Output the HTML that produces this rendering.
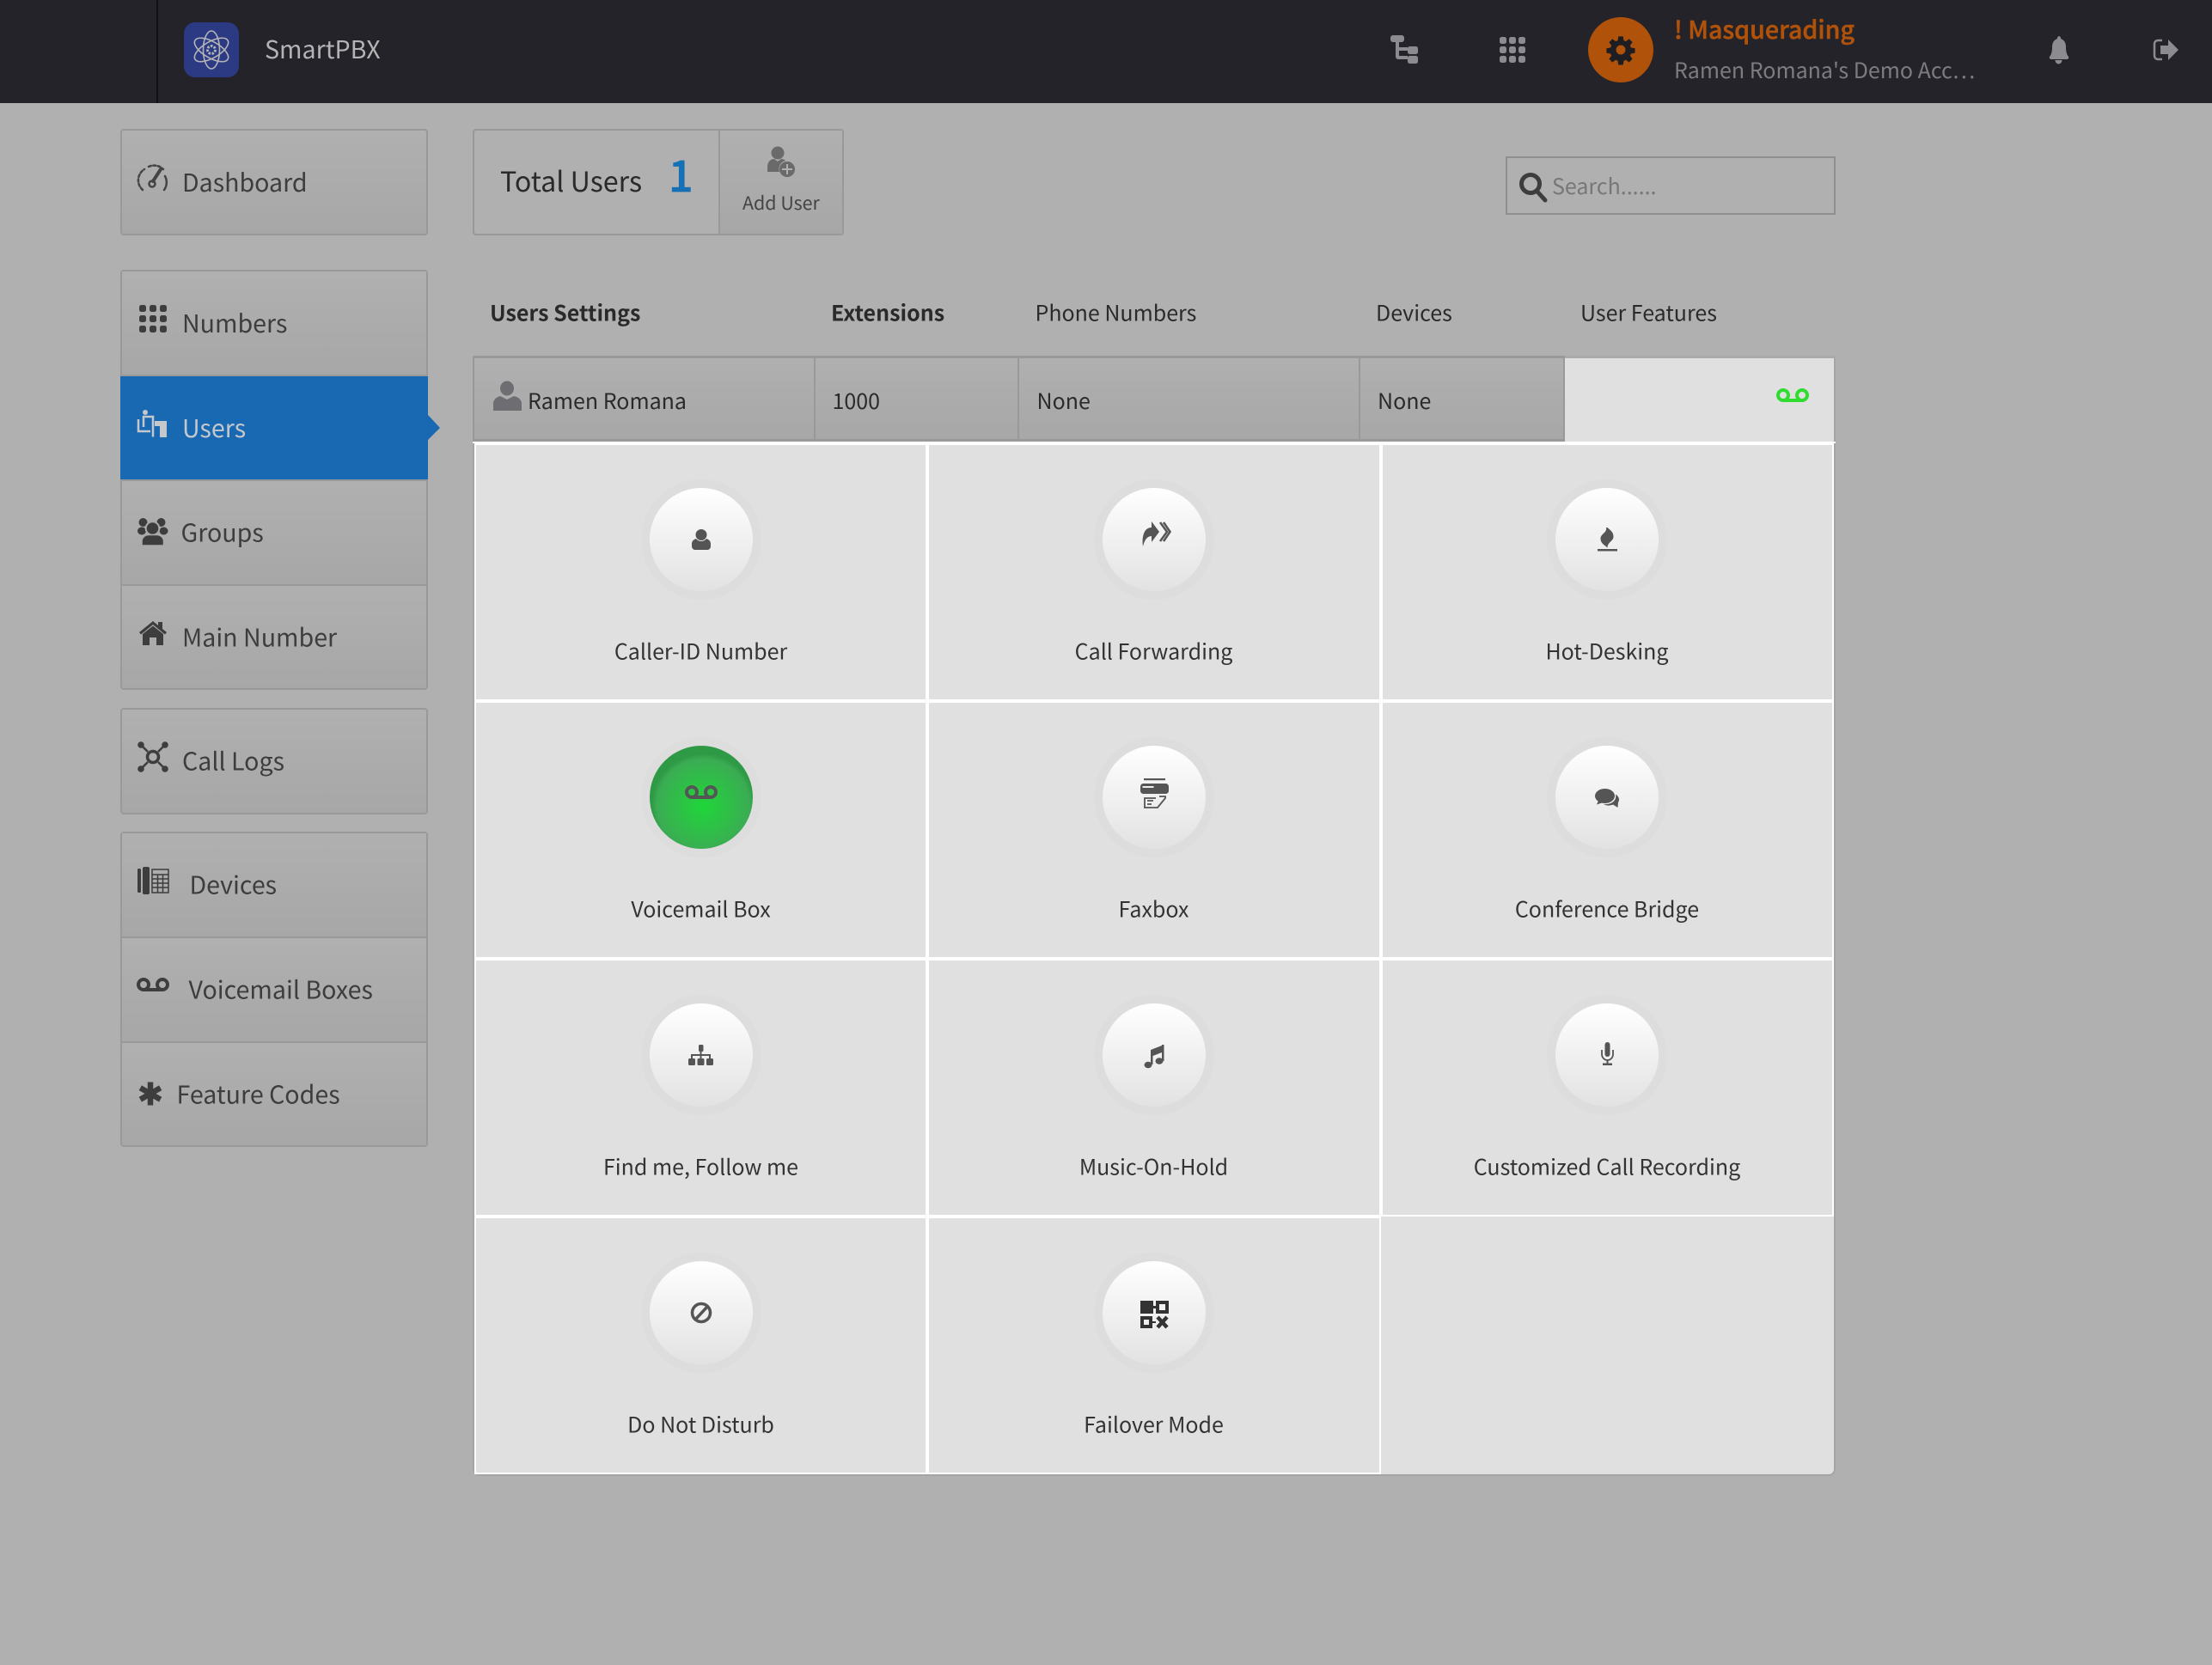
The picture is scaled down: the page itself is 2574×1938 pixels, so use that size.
<!DOCTYPE html>
<html lang="en">
<head>
<meta charset="utf-8">
<title>SmartPBX</title>
<style>
html,body{margin:0;padding:0;width:2574px;height:1938px;overflow:hidden;background:#b0b0b0}
body{position:relative;font-family:"Noto Sans CJK JP","Liberation Sans",sans-serif}
.a{position:absolute;box-sizing:border-box}
.hdr{left:0;top:0;width:2574px;height:120px;background:#232329}
.box{background:linear-gradient(#b0b0b0,#a7a7a7);border:2px solid #999;border-radius:4px}
.g{background:linear-gradient(#b0b0b0,#a7a7a7)}
.cell{height:300px;border:2px solid #fff;background:#e0e0e0}
svg{position:absolute;left:0;top:0}
text{font-family:"Noto Sans CJK JP","Liberation Sans",sans-serif}
</style>
</head>
<body>
<div class="a hdr"></div>
<div class="a" style="left:182px;top:0;width:2px;height:120px;background:#111"></div>

<div class="a box" style="left:140px;top:150px;width:358px;height:124px"></div>
<div class="a box" style="left:550px;top:150px;width:432px;height:124px;background:#b0b0b0"></div>
<div class="a g" style="left:836px;top:152px;width:144px;height:120px;border-left:2px solid #999"></div>

<div class="a box" style="left:140px;top:314px;width:358px;height:489px"></div>
<div class="a g" style="left:142px;top:316px;width:354px;height:120px"></div>
<div class="a" style="left:142px;top:436px;width:354px;height:2px;background:#999"></div>
<div class="a" style="left:140px;top:438px;width:358px;height:120px;background:#1968b2"></div>
<div class="a" style="left:142px;top:558px;width:354px;height:2px;background:#999"></div>
<div class="a g" style="left:142px;top:560px;width:354px;height:120px"></div>
<div class="a" style="left:142px;top:680px;width:354px;height:2px;background:#999"></div>
<div class="a g" style="left:142px;top:682px;width:354px;height:119px"></div>

<div class="a box" style="left:140px;top:824px;width:358px;height:124px"></div>
<div class="a box" style="left:140px;top:968px;width:358px;height:367px"></div>
<div class="a g" style="left:142px;top:970px;width:354px;height:120px"></div>
<div class="a" style="left:142px;top:1090px;width:354px;height:2px;background:#999"></div>
<div class="a g" style="left:142px;top:1092px;width:354px;height:120px"></div>
<div class="a" style="left:142px;top:1212px;width:354px;height:2px;background:#999"></div>
<div class="a g" style="left:142px;top:1214px;width:354px;height:119px"></div>

<div class="a" style="left:1752px;top:182px;width:384px;height:68px;border:2px solid #8f8f8f;background:#b0b0b0"></div>

<!-- user table -->
<div class="a" style="left:550px;top:414px;width:1586px;height:1304px;background:#e0e0e0;border:2px solid #a5a5a5;border-top:0;border-radius:0 0 8px 8px"></div>
<div class="a g" style="left:550px;top:414px;width:1271px;height:100px;border:2px solid #999;border-top:3px solid #999;border-bottom:3px solid #999"></div>
<div class="a" style="left:947px;top:414px;width:2px;height:100px;background:#999"></div>
<div class="a" style="left:1184px;top:414px;width:2px;height:100px;background:#999"></div>
<div class="a" style="left:1581px;top:414px;width:2px;height:100px;background:#999"></div>
<div class="a" style="left:1821px;top:414px;width:315px;height:3px;background:#aaa"></div>
<div class="a" style="left:550px;top:514px;width:1586px;height:2px;background:#fff"></div>

<div class="a cell" style="left:552px;top:516px;width:527px"></div>
<div class="a cell" style="left:1079px;top:516px;width:528px"></div>
<div class="a cell" style="left:1607px;top:516px;width:527px"></div>
<div class="a cell" style="left:552px;top:816px;width:527px"></div>
<div class="a cell" style="left:1079px;top:816px;width:528px"></div>
<div class="a cell" style="left:1607px;top:816px;width:527px"></div>
<div class="a cell" style="left:552px;top:1116px;width:527px"></div>
<div class="a cell" style="left:1079px;top:1116px;width:528px"></div>
<div class="a cell" style="left:1607px;top:1116px;width:527px"></div>
<div class="a cell" style="left:552px;top:1416px;width:527px"></div>
<div class="a cell" style="left:1079px;top:1416px;width:528px"></div>

<svg width="2574" height="1938" viewBox="0 0 2574 1938" xmlns="http://www.w3.org/2000/svg">
<defs>
<linearGradient id="w" x1="0" y1="0" x2="0" y2="1"><stop offset="0" stop-color="#fff"/><stop offset="1" stop-color="#e2e2e2"/></linearGradient>
<radialGradient id="gr" cx=".52" cy=".58" r=".5"><stop offset="0" stop-color="#1fd639"/><stop offset=".9" stop-color="#3bac53"/><stop offset="1" stop-color="#2f9a45"/></radialGradient>
<g id="btn"><circle r="65" fill="none" stroke="#dddddd" stroke-width="10"/><circle r="60" fill="url(#w)"/></g>
<g id="vm"><circle cx="-11" cy="0" r="6" fill="none" stroke-width="4"/><circle cx="11" cy="0" r="6" fill="none" stroke-width="4"/><path d="M-11 6H11" fill="none" stroke-width="4"/></g>
<g id="d3"><rect x="0" y="0" width="8" height="8" rx="2.5"/><rect x="12" y="0" width="8" height="8" rx="2.5"/><rect x="24" y="0" width="8" height="8" rx="2.5"/><rect x="0" y="12" width="8" height="8" rx="2.5"/><rect x="12" y="12" width="8" height="8" rx="2.5"/><rect x="24" y="12" width="8" height="8" rx="2.5"/><rect x="0" y="24" width="8" height="8" rx="2.5"/><rect x="12" y="24" width="8" height="8" rx="2.5"/><rect x="24" y="24" width="8" height="8" rx="2.5"/></g>
</defs>

<polygon points="498,483 512,498 498,512" fill="#1968b2"/>

<!-- header -->
<rect x="214" y="26" width="64" height="64" rx="13" fill="#2b3a82"/>
<g transform="translate(246,58)" fill="none" stroke="#b4b4b8" stroke-width="1.6">
<ellipse rx="9.5" ry="22"/><ellipse rx="9.5" ry="22" transform="rotate(60)"/><ellipse rx="9.5" ry="22" transform="rotate(-60)"/>
<circle r="4.5" stroke-width="3" stroke-dasharray="2.5 1.5"/>
</g>
<text x="308" y="68" font-size="28.6" fill="#b4b4b6">SmartPBX</text>

<g fill="#8b8b90">
<rect x="1618" y="41" width="16" height="8" rx="3"/>
<path d="M1624 49h4v16h10v4h-11a3 3 0 0 1-3-3zM1628 55h10v4h-10z"/>
<rect x="1638" y="54" width="12" height="9" rx="2.5"/>
<rect x="1638" y="65" width="12" height="9" rx="2.5"/>
</g>
<g fill="#8b8b90">
<rect x="1745" y="43" width="8" height="8" rx="2.5"/><rect x="1756" y="43" width="8" height="8" rx="2.5"/><rect x="1767" y="43" width="8" height="8" rx="2.5"/>
<rect x="1745" y="54" width="8" height="8" rx="2.5"/><rect x="1756" y="54" width="8" height="8" rx="2.5"/><rect x="1767" y="54" width="8" height="8" rx="2.5"/>
<rect x="1745" y="65" width="8" height="8" rx="2.5"/><rect x="1756" y="65" width="8" height="8" rx="2.5"/><rect x="1767" y="65" width="8" height="8" rx="2.5"/>
</g>
<circle cx="1886" cy="58" r="38" fill="#b0520a"/>
<g transform="translate(1886,58) scale(.78)" fill="#1d1d22">
<path fill-rule="evenodd" d="M-3.5-20h7l1 6 3 1.300 5-3.500 4.900 4.900-3.500 5 1.300 3 6 1v7l-6 1-1.300 3 3.500 5-4.900 4.900-5-3.500-3 1.300-1 6h-7l-1-6-3-1.300-5 3.500-4.900-4.900 3.500-5-1.300-3-6-1v-7l6-1 1.300-3-3.500-5 4.900-4.900 5 3.500 3-1.300zM0-7a7 7 0 1 0 0 14a7 7 0 1 0 0-14z"/>
</g>
<text x="1948" y="45" font-size="28.6" font-weight="500" fill="#b0520a" stroke="#b0520a" stroke-width=".5">! Masquerading</text>
<text x="1948" y="91" font-size="25" fill="#7d7d80">Ramen Romana's Demo Acc…</text>
<path d="M2395.500 42a2.500 2.500 0 0 1 2.500 3c4 1.500 6 5 6 9.500c0 6 1 9 3 11.500a2 2 0 0 1-1.500 3h-19a2 2 0 0 1-1.500-3c2-2.500 3-5.500 3-11.500c0-4.500 2-8 6-9.500a2.500 2.500 0 0 1 2.500-3zM2391.500 70h8c0 2.500-2 4.500-4 4.500s-4-2-4-4.500z" fill="#8b8b90"/>
<path d="M2516 47h-5a4 4 0 0 0-4 4v14a4 4 0 0 0 4 4h5" fill="none" stroke="#8b8b90" stroke-width="2.500"/>
<path d="M2514 53h9v-7l12 12-12 12v-7h-9z" fill="#8b8b90"/>

<!-- sidebar icons -->
<g fill="none" stroke="#444" stroke-linecap="round" transform="translate(1,0)">
<path d="M165 221a15 15 0 0 1 2-24" stroke-width="2.500" stroke-dasharray="3 2.500"/>
<path d="M172 194a15 15 0 0 1 17 3" stroke-width="2.500" stroke-dasharray="3 2.500"/>
<path d="M191 205a15 15 0 0 1-1 16" stroke-width="2.500"/>
<path d="M177 211l9-14" stroke-width="4"/>
<circle cx="176" cy="214" r="3.500" stroke-width="2.500"/>
</g>
<use href="#d3" x="162" y="355" fill="#3d3d3d"/>
<g>
<circle cx="169" cy="480" r="3" fill="#c3c8cd"/>
<path d="M161 488v14h14" fill="none" stroke="#c3c8cd" stroke-width="2.500"/>
<path d="M167 497v-12h11v23.500" fill="none" stroke="#c3c8cd" stroke-width="2.500"/>
<path d="M180 490h14v19h-8v-13h-6z" fill="#c3c8cd"/>
</g>
<!-- groups -->
<g fill="#3d3d3d">
<circle cx="166.500" cy="608" r="5"/><circle cx="187.500" cy="608" r="5"/>
<ellipse cx="165" cy="618" rx="5" ry="4.500"/><ellipse cx="190.500" cy="618" rx="5" ry="4.500"/>
<circle cx="177.500" cy="615" r="7.800" stroke="#aaa" stroke-width="2"/>
<path d="M165 635v-5c0-4.500 4-7.500 8-7.500h9.500c4 0 8 3 8 7.500v5a.5 .5 0 0 1-1 0h-24z" stroke="#aaa" stroke-width="1.500"/>
</g>
<g fill="#3d3d3d">
<path d="M178 723l-16 13 2 2.500 14-11.500 14 11.500 2-2.500-5-4v-8h-5v4z"/>
<path d="M166 738l12-9.500 12 9.500v13h-8v-9h-8v9h-8z"/>
</g>
<g fill="#3d3d3d">
<circle cx="164" cy="867" r="3.800"/><circle cx="192" cy="867" r="3.800"/><circle cx="164" cy="895" r="3.800"/><circle cx="192" cy="895" r="3.800"/>
</g>
<g stroke="#3d3d3d" fill="none">
<circle cx="178" cy="881" r="6.500" stroke-width="3.500"/>
<path d="M166 869l6 6M190 869l-6 6M166 893l6-6M190 893l-6-6" stroke-width="2.500"/>
</g>
<g fill="#3d3d3d">
<rect x="160" y="1011" width="4" height="28" rx="1.500"/>
<rect x="166" y="1009" width="8" height="32" rx="2"/>
</g>
<g fill="none" stroke="#3d3d3d" stroke-width="1.500">
<rect x="177" y="1012" width="19" height="27"/>
<path d="M177 1018h19M177 1023h19M177 1028h19M177 1033h19M183.500 1018v21M189.500 1018v21"/>
</g>
<use href="#vm" transform="translate(178,1146)" stroke="#3d3d3d"/>
<g transform="translate(175,1273)" stroke="#3d3d3d" stroke-width="6.500">
<path d="M0-13.500V13.500M-11.700-6.750L11.700 6.750M-11.700 6.750L11.700-6.750"/>
</g>

<!-- top bar icons -->
<g fill="#6a6a6a">
<circle cx="905" cy="178" r="7.500"/>
<path d="M893 200v-6c0-6 4-9 8-9l4 3 4-3c2 0 4 1 5 2a10 10 0 0 0-7 13z"/>
<circle cx="916" cy="197" r="9"/>
</g>
<path d="M916 191v12M910 197h12" stroke="#b0b0b0" stroke-width="2"/>
<g fill="none" stroke="#3d3d3d">
<circle cx="1781" cy="214" r="10.500" stroke-width="5"/>
<path d="M1788 222l10 11" stroke-width="5" stroke-linecap="round"/>
</g>

<!-- labels sidebar -->
<g font-size="28.600" fill="#3d3d3d">
<text x="212" y="223">Dashboard</text>
<text x="212" y="387">Numbers</text>
<text x="212" y="509" fill="#c3c8cd">Users</text>
<text x="210.500" y="630.500">Groups</text>
<text x="212" y="752.500">Main Number</text>
<text x="212" y="896.500">Call Logs</text>
<text x="220.500" y="1040.500">Devices</text>
<text x="219.500" y="1162.500">Voicemail Boxes</text>
<text x="205.500" y="1284.500">Feature Codes</text>
</g>
<text x="582" y="223" font-size="32.200" fill="#2a2a2a">Total Users</text>
<text x="778" y="223" font-size="50" font-weight="500" fill="#1570b5" stroke="#1570b5" stroke-width=".8">1</text>
<text x="864" y="244" font-size="21.400" fill="#444">Add User</text>
<text x="1806" y="226" font-size="25" fill="#777">Search......</text>

<!-- table head -->
<g font-size="25" fill="#2a2a2a">
<text x="570" y="373.500" font-weight="700">Users Settings</text>
<text x="967" y="373.500" font-weight="700">Extensions</text>
<text x="1204.500" y="373.500">Phone Numbers</text>
<text x="1601" y="373.500">Devices</text>
<text x="1839" y="373.500">User Features</text>
<text x="614" y="476">Ramen Romana</text>
<text x="968.500" y="476">1000</text>
<text x="1206.500" y="476">None</text>
<text x="1603" y="476">None</text>
</g>
<g fill="#6d6d72">
<ellipse cx="590" cy="452" rx="8" ry="8.500"/>
<path d="M574 478v-8c0-5 4-8 8-9l8 4 8-4c5 1 9 4 9 9v8z"/>
</g>
<use href="#vm" transform="translate(2086,460)" stroke="#2fdc2f"/>

<!-- buttons -->
<use href="#btn" x="816" y="628"/><use href="#btn" x="1343" y="628"/><use href="#btn" x="1870" y="628"/>
<circle cx="816" cy="928" r="65" fill="none" stroke="#dddddd" stroke-width="10"/><circle cx="816" cy="928" r="60" fill="url(#gr)"/>
<use href="#btn" x="1343" y="928"/><use href="#btn" x="1870" y="928"/>
<use href="#btn" x="816" y="1228"/><use href="#btn" x="1343" y="1228"/><use href="#btn" x="1870" y="1228"/>
<use href="#btn" x="816" y="1528"/><use href="#btn" x="1343" y="1528"/>

<!-- button icons -->
<g fill="#555">
<path d="M805 636v-3c0-3 2-5 5-6 3 2.500 8 2.500 12 0 3 1 5 3 5 6v3a4 4 0 0 1-4 4h-14a4 4 0 0 1-4-4z"/>
<ellipse cx="816" cy="622.500" rx="7" ry="7" stroke="#f2f2f2" stroke-width="1"/>
<path d="M1340 607L1349 619L1340 631V624C1335 624 1332 628 1330 636C1328.500 625 1331 614 1340 614Z"/>
<path d="M1871 614C1874 617 1878 619 1878 624.500C1878 630 1871 631 1871 637.500C1867 634 1863 632 1863 627C1863 621 1871 620 1869.500 614Z" transform="translate(-.5,0)"/>
<rect x="1859" y="639" width="23" height="2.500"/>
<rect x="1331" y="906" width="25" height="2.200"/>
<rect x="1327" y="912" width="33" height="12" rx="3.500"/>
<rect x="1329.500" y="915" width="13" height="2" fill="#eee"/>
<ellipse cx="1867.500" cy="926.500" rx="11.500" ry="8.500"/>
<path d="M1860 932L1858 936.500L1864 934.500Z"/>
<path d="M1880 924.500C1884 927 1885 931 1883 934L1882.500 940L1877 936.500C1873 938 1869 938 1866 936C1873 937 1882 933 1880 924.500Z"/>
<rect x="813" y="1216" width="5.500" height="8" rx="1.500"/>
<rect x="801" y="1232" width="8" height="8" rx="1.500"/><rect x="811.500" y="1232" width="8" height="8" rx="1.500"/><rect x="822" y="1232" width="8" height="8" rx="1.500"/>
<path d="M814.500 1224h2v3h10.500v5h-2v-3h-8.500v3h-2v-3h-8.500v3h-2v-5h10.500z"/>
<g transform="translate(-1,0)">
<path d="M1340 1222L1355.500 1216V1224L1340 1230Z"/>
<rect x="1340" y="1222" width="2.500" height="17"/><rect x="1353" y="1216" width="2.500" height="19"/>
<ellipse cx="1337" cy="1239.500" rx="4.500" ry="3.800"/><ellipse cx="1350" cy="1235" rx="4.500" ry="3.800"/>
</g>
<rect x="1867.500" y="1213" width="6" height="17" rx="3"/>
<path d="M1864 1222v5c0 4 3 7 6.500 7s6.500-3 6.500-7v-5" fill="none" stroke="#555" stroke-width="1.800"/>
<rect x="1869.500" y="1233" width="2" height="5"/><rect x="1865" y="1237.500" width="11" height="2.500"/>
</g>
<g fill="none" stroke="#555">
<path d="M1350 608l8 11-8 11M1354 608l7.500 11-7.500 11" stroke-width="2.500"/>
<path d="M1345 929h-13v11h15l9-11v-2h-6v-1" stroke-width="1.800"/>
<path d="M1335 932h7M1335 936h5" stroke-width="1.800"/>
<circle cx="816" cy="1528" r="10.500" stroke-width="3.500"/>
<path d="M809 1536l14-15" stroke-width="3.500"/>
</g>
<use href="#vm" transform="translate(816,922)" stroke="#555"/>
<g fill="#333" transform="translate(1,0)">
<rect x="1326" y="1514" width="15" height="15"/>
<path d="M1344 1514h15v15h-15zM1348 1518v7h7v-7z" fill-rule="evenodd"/>
<path d="M1326 1532h14v14h-14zM1330 1536v6h6v-6z" fill-rule="evenodd"/>
<rect x="1341" y="1520" width="3" height="3"/><rect x="1340" y="1538" width="4" height="2"/>
<path d="M1346 1533l11 12M1357 1533l-11 12" stroke="#333" stroke-width="4.500"/>
</g>

<g font-size="25" fill="#333" text-anchor="middle">
<text x="815.500" y="767.500">Caller-ID Number</text>
<text x="1342.500" y="767.500">Call Forwarding</text>
<text x="1870" y="767.500">Hot-Desking</text>
<text x="815.500" y="1067.500">Voicemail Box</text>
<text x="1342.500" y="1067.500">Faxbox</text>
<text x="1870" y="1067.500">Conference Bridge</text>
<text x="815.500" y="1367.500">Find me, Follow me</text>
<text x="1342.500" y="1367.500">Music-On-Hold</text>
<text x="1870" y="1367.500">Customized Call Recording</text>
<text x="815.500" y="1667.500">Do Not Disturb</text>
<text x="1342.500" y="1667.500">Failover Mode</text>
</g>
</svg>
</body>
</html>
